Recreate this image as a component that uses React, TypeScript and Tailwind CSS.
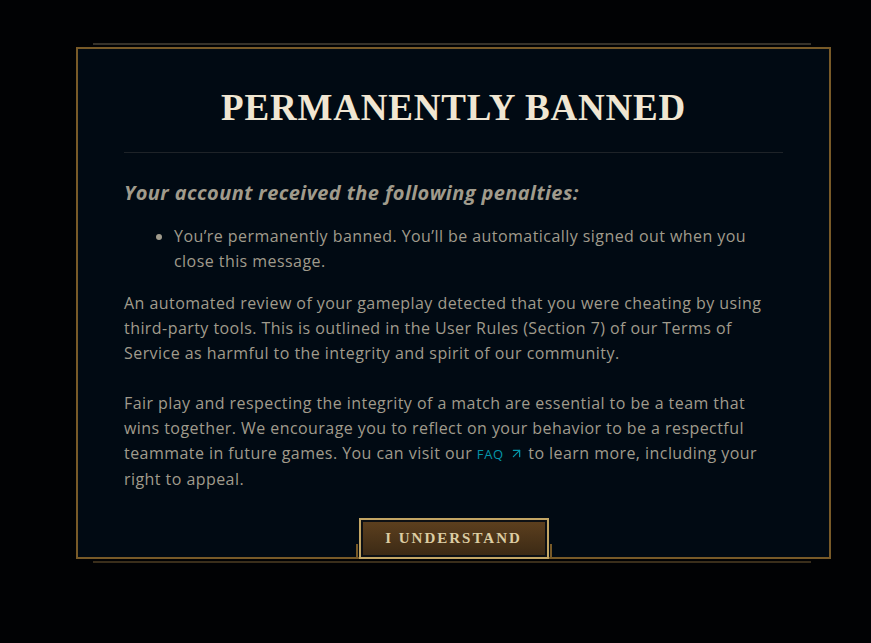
import { ArrowUpRight } from 'lucide-react';

const body = "font-['Open_Sans',sans-serif] text-[16px] leading-[25px] tracking-[0.44px] text-[#a09b8c]";

export default function App() {
  return (
    <div className="min-h-screen w-full bg-[#010204] pt-[47px] pl-[76px]">
      <div className="relative w-[755px]">
        {/* back frame that peeks out above and below the panel */}
        <div className="absolute -top-[4px] -bottom-[4px] left-[17px] right-[20px] border-y-2 border-t-[#36322a] border-b-[#3a2e1b]" />

        <div className="relative flex flex-col border-2 border-[#785a28] bg-[#010a13] px-[46px]">
          <h1 className="pt-[37px] text-center font-['Liberation_Serif',serif] text-[37px] font-bold leading-[44px] tracking-[0.8px] text-[#f0e6d2]">
            PERMANENTLY BANNED
          </h1>

          <div className="mt-[22px] h-px bg-[#1e2328]" />

          <h2 className="mt-[26px] font-['Open_Sans',sans-serif] text-[20px] font-bold italic leading-[28px] tracking-[0.4px] text-[#a09b8c]">
            Your account received the following penalties:
          </h2>

          <ul className={`mt-[17px] list-disc pl-[50px] ${body}`}>
            <li>
              You’re permanently banned. You’ll be automatically signed out when you close this
              message.
            </li>
          </ul>

          <p className={`mt-[17px] ${body}`}>
            An automated review of your gameplay detected that you were cheating by using
            third-party tools. This is outlined in the User Rules (Section 7) of our Terms of
            Service as harmful to the integrity and spirit of our community.
          </p>

          <p className={`mt-[25px] ${body}`}>
            Fair play and respecting the integrity of a match are essential to be a team that
            wins together. We encourage you to reflect on your behavior to be a respectful
            teammate in future games. You can visit our{' '}
            <a href="#" className="text-[13px] tracking-[0.6px] text-[#0596aa]">
              FAQ
              <ArrowUpRight className="ml-[5px] inline h-[15px] w-[15px] align-[-2px]" strokeWidth={2} />
            </a>{' '}
            to learn more, including your right to appeal.
          </p>

          <div className="relative mt-[26px] -mb-[2px] flex justify-center">
            <div className="flex items-end">
              <span className="mb-[2px] h-[13px] w-[2px] bg-[#785a28]" />
              <button className="ml-[1px] mr-[1px] h-[41px] w-[190px] border-2 border-[#c3a665] bg-[#0d1014] p-[2px]">
                <span className="flex h-full w-full items-center justify-center bg-gradient-to-b from-[#5c3f1e] to-[#3c2a15] font-['Liberation_Serif',serif] text-[15px] font-bold tracking-[2px] text-[#dccda3]">
                  I UNDERSTAND
                </span>
              </button>
              <span className="mb-[2px] h-[13px] w-[2px] bg-[#785a28]" />
            </div>
          </div>
        </div>
      </div>
    </div>
  );
}
